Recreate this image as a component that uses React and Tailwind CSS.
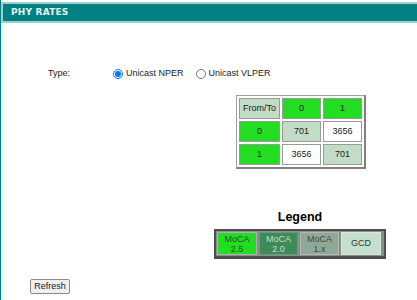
export default function App() {
  const green = "bg-[#22dd22]";
  const pale = "bg-[#c2dcc6]";
  const cell = "h-[21px] border border-[#9a9a9a] text-center align-middle p-0";
  return (
    <div className="w-[417px] h-[300px] bg-white border-l border-[#008080] font-['Liberation_Sans',Arial,sans-serif] text-[9px] text-[#222] overflow-hidden">
      <div className="mt-[2px] h-[21px] border-y-2 border-l-2 border-[#9fd0d0] bg-[#008080] flex items-center pl-[8px]">
        <span className="font-['DejaVu_Sans',sans-serif] font-bold text-[9px] text-[#e8f4f4] tracking-[0.2px]">PHY RATES</span>
      </div>

      <div className="mt-[44px] h-[14px] flex items-center pl-[47px]">
        <span className="w-[65px]">Type:</span>
        <input type="radio" name="t" defaultChecked className="w-[10px] h-[10px] m-0 accent-[#0075ff]" />
        <span className="ml-[3px]">Unicast NPER</span>
        <input type="radio" name="t" className="w-[10px] h-[10px] m-0 ml-[12px]" />
        <span className="ml-[3px]">Unicast VLPER</span>
      </div>

      <div className="mt-[14px] ml-[235px]">
        <table className="border-separate border-spacing-[2px] border border-[#a0a0a0] border-r-2 border-b-2 border-r-[#808080] border-b-[#808080]">
          <tbody>
            <tr>
              <td className={`${cell} ${pale} w-[41px]`}>From/To</td>
              <td className={`${cell} ${green} w-[39px]`}>0</td>
              <td className={`${cell} ${green} w-[39px]`}>1</td>
            </tr>
            <tr>
              <td className={`${cell} ${green}`}>0</td>
              <td className={`${cell} ${pale}`}>701</td>
              <td className={`${cell} bg-white`}>3656</td>
            </tr>
            <tr>
              <td className={`${cell} ${green}`}>1</td>
              <td className={`${cell} bg-white`}>3656</td>
              <td className={`${cell} ${pale}`}>701</td>
            </tr>
          </tbody>
        </table>
      </div>

      <div className="mt-[41px] ml-[213px] w-[172px]">
        <div className="text-center font-['Liberation_Sans',Arial,sans-serif] font-bold text-[12.5px] leading-[15px] text-black">Legend</div>
        <div className="mt-[4px] border-2 border-b-[3px] border-[#4e4e4e] bg-[#8c8c8c] p-[1px] flex gap-[2px]">
          <div className="w-[40px] h-[23px] border border-[#b0b0b0] bg-[#22dd22] flex flex-col items-center justify-center leading-[10px] text-[#245024]">
            <span>MoCA</span><span>2.5</span>
          </div>
          <div className="w-[39px] h-[23px] border border-[#6a9a7a] bg-[#3c8c5a] flex flex-col items-center justify-center leading-[10px] text-[#c8dcc8]">
            <span>MoCA</span><span>2.0</span>
          </div>
          <div className="w-[39px] h-[23px] border border-[#b0b8b0] bg-[#90a898] flex flex-col items-center justify-center leading-[10px] text-[#3a4a40]">
            <span>MoCA</span><span>1.x</span>
          </div>
          <div className="w-[40px] h-[23px] border border-[#d8e8dc] bg-[#c4e0cc] flex items-center justify-center text-[#333]">
            GCD
          </div>
        </div>
      </div>

      <div className="mt-[20px] ml-[29px]">
        <button className="w-[40px] h-[15px] border border-[#8a8a8a] bg-[#efefef] text-[9px] leading-[13px] text-[#222] rounded-[2px] p-0">Refresh</button>
      </div>
    </div>
  );
}
